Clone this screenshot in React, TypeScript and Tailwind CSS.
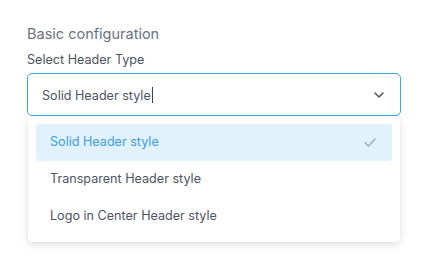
import { useState } from "react";

const options = ["Solid Header style", "Transparent Header style", "Logo in Center Header style"];

export default function App() {
  const [selected] = useState(options[0]);

  return (
    <div className="min-h-[278px] bg-white pl-[27px] pr-[25px] pt-[24px] font-['Inter',sans-serif]">
      <h2 className="text-[14.5px] leading-[20px] text-[#6b7280]">Basic configuration</h2>
      <label className="mt-[7px] block text-[12.6px] leading-[17px] text-[#4b5563]">Select Header Type</label>

      {/* Select + menu */}
      <div className="relative mt-[5px]">
        <div className="flex h-[43px] items-center justify-between rounded-[5px] border border-[#38a9e8] pl-[14px] pr-[16px]">
          <span className="text-[12.6px] text-[#4b5563]">
            {selected}
            <span className="ml-px inline-block h-[16px] w-px translate-y-[3px] bg-[#374151]" />
          </span>
          <svg width="10" height="6" viewBox="0 0 10 6" className="text-[#4b5563]">
            <path d="M1 1l4 4 4-4" fill="none" stroke="currentColor" strokeWidth="1.5" strokeLinecap="round" strokeLinejoin="round" />
          </svg>
        </div>

        <ul className="absolute left-px right-px top-[43px] rounded-b-[4px] bg-white px-[8px] pb-[7px] pt-[8px] shadow-[0_3px_8px_rgba(0,0,0,0.12),0_0_1px_rgba(0,0,0,0.15)]">
          {options.map((o) => {
            const active = o === selected;
            return (
              <li
                key={o}
                className={`flex h-[37px] items-center justify-between rounded-[3px] pl-[14px] pr-[16px] text-[12.6px] ${
                  active ? "bg-[#e1f2fd] text-[#3b9ede]" : "text-[#4b5563]"
                }`}
              >
                <span>{o}</span>
                {active && (
                  <svg width="12" height="9" viewBox="0 0 12 9" className="text-[#a1a8b3]">
                    <path d="M1 4.5l3.5 3.5L11 1" fill="none" stroke="currentColor" strokeWidth="1.4" strokeLinecap="round" strokeLinejoin="round" />
                  </svg>
                )}
              </li>
            );
          })}
        </ul>
      </div>
    </div>
  );
}
